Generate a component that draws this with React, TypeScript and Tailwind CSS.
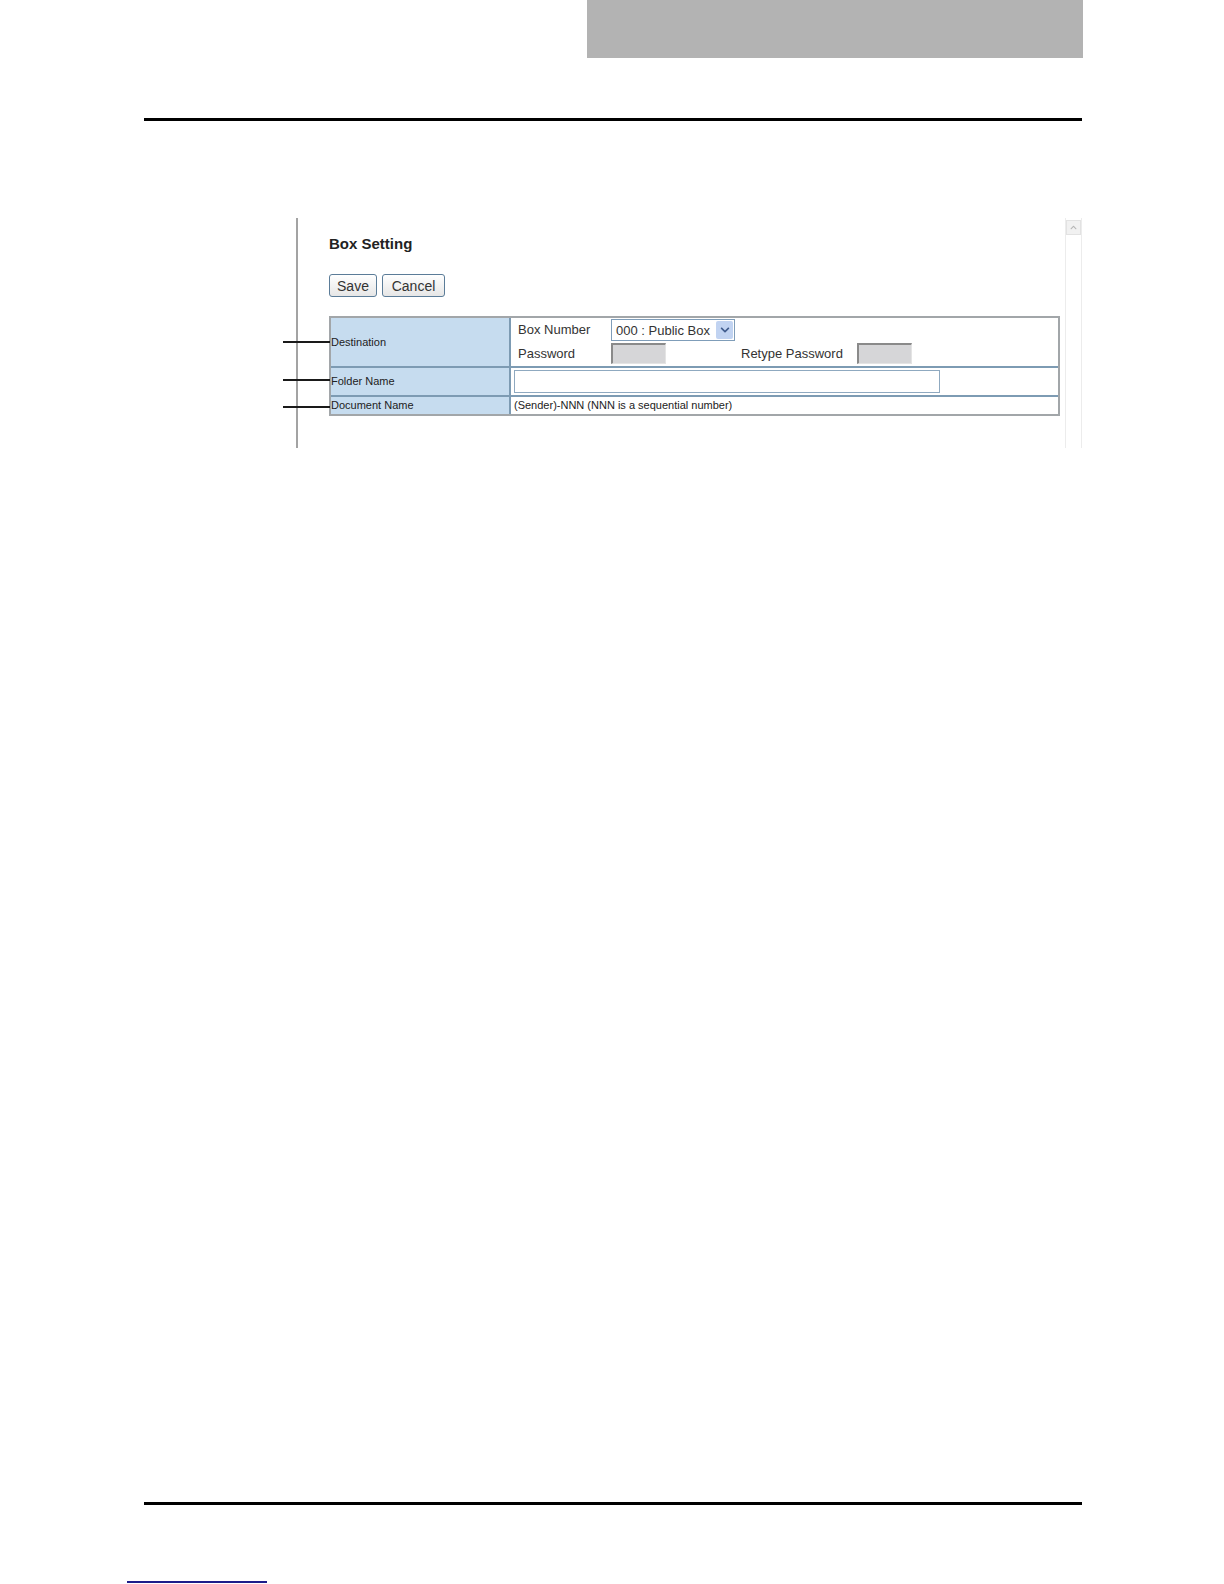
import { FaChevronDown, FaChevronUp } from "react-icons/fa";

const Callout = ({ top }: { top: number }) => (
  <div className="absolute left-0 w-[47px] h-[2px] bg-[#1a1a1a]" style={{ top }} />
);

const GrayInput = ({ width }: { width: number }) => (
  <div
    className="h-[21px] bg-[#d6d6d8] border-t-2 border-l-2 border-t-[#8a8a8a] border-l-[#8a8a8a] border-r border-b border-r-[#e4e4e4] border-b-[#e4e4e4]"
    style={{ width }}
  />
);

const BoxSettingPanel = () => (
  <div className="relative ml-[283px] w-[800px] h-[230px] flex">
    {/* callout leader lines */}
    <Callout top={123} />
    <Callout top={161} />
    <Callout top={188} />

    <div className="ml-[13px] w-[2px] h-full bg-[#a3a3a3]" />

    <div className="w-[767px] pl-[31px] pt-[17px]">
      <h1 className="text-[15px] leading-[18px] font-bold text-[#222]">Box Setting</h1>

      <div className="mt-[21px] flex gap-[5px]">
        <button className="w-[48px] h-[23px] rounded-[3px] border border-[#5b7c98] bg-gradient-to-b from-white to-[#e6e6e6] text-[14px] text-[#333] leading-none">
          Save
        </button>
        <button className="w-[63px] h-[23px] rounded-[3px] border border-[#5b7c98] bg-gradient-to-b from-white to-[#e6e6e6] text-[14px] text-[#333] leading-none">
          Cancel
        </button>
      </div>

      <div className="mt-[19px] w-[731px] border-2 border-[#a2a6a9] text-[#222]">
        {/* Destination */}
        <div className="flex h-[50px] border-b-2 border-[#7d9bb3]">
          <div className="w-[180px] bg-[#c6dcef] border-r-2 border-[#7d9bb3] flex items-center text-[11px]">
            Destination
          </div>
          <div className="flex-1 pl-[7px] pt-px">
            <div className="flex items-center h-[22px]">
              <span className="w-[93px] text-[13px] text-[#333]">Box Number</span>
              <div className="w-[124px] h-[22px] border border-[#7f9db9] bg-white flex items-center">
                <span className="flex-1 pl-[4px] text-[13px] leading-none text-[#333]">000 : Public Box</span>
                <div className="w-[17px] h-[18px] mr-px rounded-[2px] bg-[#c1d3f1] flex items-center justify-center text-[#3f5b8c]">
                  <FaChevronDown size={10} />
                </div>
              </div>
            </div>
            <div className="flex items-center mt-[2px] h-[21px]">
              <span className="w-[93px] text-[13px] text-[#333]">Password</span>
              <GrayInput width={55} />
              <span className="ml-[75px] w-[116px] text-[13px] text-[#333]">Retype Password</span>
              <GrayInput width={55} />
            </div>
          </div>
        </div>

        {/* Folder Name */}
        <div className="flex h-[29px] border-b-2 border-[#7d9bb3]">
          <div className="w-[180px] bg-[#c6dcef] border-r-2 border-[#7d9bb3] flex items-center text-[11px]">
            Folder Name
          </div>
          <div className="flex-1 pl-[3px] flex items-center">
            <div className="w-[426px] h-[23px] border border-[#8fa9c0] bg-white" />
          </div>
        </div>

        {/* Document Name */}
        <div className="flex h-[17px]">
          <div className="w-[180px] bg-[#c6dcef] border-r-2 border-[#7d9bb3] flex items-center text-[11px]">
            Document Name
          </div>
          <div className="flex-1 pl-[3px] flex items-center text-[11px]">
            (Sender)-NNN (NNN is a sequential number)
          </div>
        </div>
      </div>
    </div>

    {/* scrollbar */}
    <div className="w-[17px] h-full border-l border-r border-[#ececec] pt-[2px]">
      <div className="h-[15px] bg-[#f1f1f1] border border-[#e2e2e2] flex items-center justify-center text-[#b5b5b5]">
        <FaChevronUp size={7} />
      </div>
    </div>
  </div>
);

export default function App() {
  return (
    <div className="w-[1224px] h-[1584px] overflow-hidden bg-white flex flex-col font-['Liberation_Sans',Arial,sans-serif]">
      <div className="h-[58px] shrink-0 flex">
        <div className="ml-[587px] w-[496px] h-full bg-[#b3b3b3]" />
      </div>

      <div className="mt-[60px] ml-[144px] w-[938px] h-[3px] shrink-0 bg-black" />

      <div className="mt-[97px] shrink-0">
        <BoxSettingPanel />
      </div>

      <div className="mt-[1054px] ml-[144px] w-[938px] h-[3px] shrink-0 bg-black" />

      <div className="mt-[76px] ml-[127px] w-[140px] h-[2px] shrink-0 bg-[#1c1c8a]" />
    </div>
  );
}
